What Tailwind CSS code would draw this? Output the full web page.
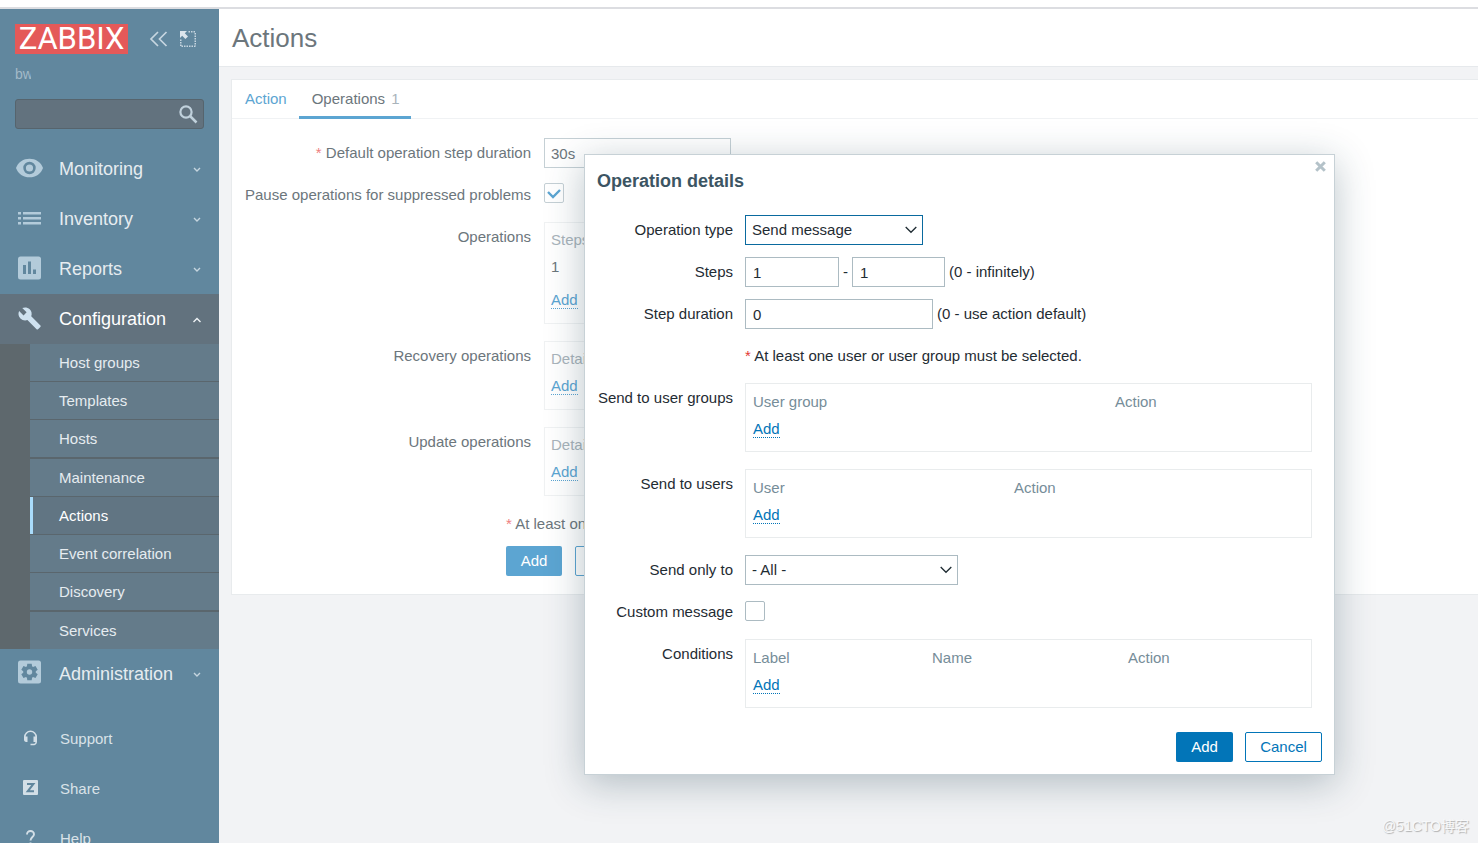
<!DOCTYPE html>
<html lang="en">
<head>
<meta charset="utf-8">
<title>Actions</title>
<script src="https://cdn.jsdelivr.net/npm/@tailwindcss/browser@4"></script>
</head>
<body class="relative flex h-screen flex-col overflow-hidden bg-[#f2f3f5] font-['Liberation_Sans','Noto_Sans_CJK_SC',sans-serif] text-[15px] leading-5 text-[#6c767c]">
<div class="h-[9px] shrink-0 border-b-2 border-[#dcdde1] bg-white"></div>
<div class="flex min-h-0 flex-1">
  <!-- Sidebar -->
  <aside class="flex w-[219px] shrink-0 flex-col overflow-hidden bg-[#61879e] text-[#e6ecf0]">
    <div class="flex shrink-0 items-center pt-[15px] pl-[15px]">
      <a href="#" class="flex h-[30px] w-[113px] items-center justify-center bg-[#e45959] font-[Roboto,sans-serif] text-[31px] leading-[30px] text-white">ZABBIX</a>
      <button type="button" aria-label="Collapse sidebar" class="ml-[21px]"><svg width="19" height="16" viewBox="0 0 19 16" fill="none" stroke="#c7d6e0" stroke-width="1.700"><path d="M9 1L2 8L9 15M17.500 1L10.500 8L17.500 15"/></svg></button>
      <button type="button" aria-label="Hide sidebar" class="ml-3"><svg width="16" height="16" viewBox="0 0 16 16" fill="none"><path d="M8.500 .75H16M15.250 2V15.500M.75 8.500V15.500M1.500 15.250H15" stroke="#c7d6e0" stroke-width="1.500" stroke-dasharray="1.500 1"/><path d="M0 0H7L4.800 2.200L8 5.400L5.400 8L2.200 4.800L0 7Z" fill="#dbe5ec"/></svg></button>
    </div>
    <div class="mt-[10px] ml-[15px] w-4 shrink-0 overflow-hidden text-sm leading-5 text-[#a3bac8]">bw</div>
    <label class="relative mx-[15px] mt-[15px] block shrink-0">
      <input type="text" aria-label="Search" class="block h-[30px] w-full rounded-[3px] border border-[#56646d] bg-[#62727e] px-2 outline-none">
      <svg class="absolute top-[6px] right-[6px]" width="19" height="19" viewBox="0 0 19 19" fill="none" stroke="#c0d1dc"><circle cx="7" cy="7" r="5.600" stroke-width="2.200"/><path d="M11 11L17.500 17.500" stroke-width="2.500"/></svg>
    </label>
    <nav class="mt-[15px] shrink-0 text-[18px]">
      <a href="#" class="flex h-[50px] items-center pr-[17px] pl-[15px]">
        <svg width="29" height="30" viewBox="0 0 29 30"><path d="M1 14C3 8 8.500 4.700 14.500 4.700S26 8 28 14C26 20 20.500 23.300 14.500 23.300S3 20 1 14Z" fill="#b3cbda"/><circle cx="14.500" cy="14" r="4.900" fill="none" stroke="#61879e" stroke-width="2.600"/></svg>
        <span class="ml-[15px] flex-1">Monitoring</span>
        <svg width="10" height="8" viewBox="0 0 10 8" fill="none" stroke="#c5d5df" stroke-width="1.400"><path d="M2 3L5 6L8 3"/></svg>
      </a>
      <a href="#" class="flex h-[50px] items-center pr-[17px] pl-[15px]">
        <svg width="29" height="30" viewBox="0 0 29 30" fill="#b3cbda"><path d="M3 8h3v2.500H3zM8 8h18v2.500H8zM3 13h3v2.500H3zM8 13h18v2.500H8zM3 18h3v2.500H3zM8 18h18v2.500H8z"/></svg>
        <span class="ml-[15px] flex-1">Inventory</span>
        <svg width="10" height="8" viewBox="0 0 10 8" fill="none" stroke="#c5d5df" stroke-width="1.400"><path d="M2 3L5 6L8 3"/></svg>
      </a>
      <a href="#" class="flex h-[50px] items-center pr-[17px] pl-[15px]">
        <svg width="29" height="30" viewBox="0 0 29 30"><rect x="3" y="2.500" width="23" height="23" rx="2.500" fill="#b3cbda"/><path d="M8 11h3v9H8zM13 7.500h3V20h-3zM18 15.500h3V20h-3z" fill="#61879e"/></svg>
        <span class="ml-[15px] flex-1">Reports</span>
        <svg width="10" height="8" viewBox="0 0 10 8" fill="none" stroke="#c5d5df" stroke-width="1.400"><path d="M2 3L5 6L8 3"/></svg>
      </a>
      <a href="#" class="flex h-[50px] items-center bg-[#62727e] pr-[17px] pl-[15px] text-white">
        <svg width="29" height="30" viewBox="0 0 29 30"><path transform="translate(2.500 2.300) scale(1.010)" d="M22.700 19L13.600 9.900c.9-2.300.4-5-1.500-6.900-2-2-5-2.400-7.400-1.300L9 6 6 9 1.600 4.700C.4 7.100.9 10.100 2.900 12.100c1.900 1.900 4.600 2.400 6.900 1.500l9.100 9.100c.4.4 1 .4 1.400 0l2.300-2.300c.5-.4.5-1.100.1-1.400z" fill="#cfe2f0"/></svg>
        <span class="ml-[15px] flex-1">Configuration</span>
        <svg width="10" height="8" viewBox="0 0 10 8" fill="none" stroke="#eef3f6" stroke-width="1.400"><path d="M1.500 7L5 3.500L8.500 7"/></svg>
      </a>
      <div class="bg-[#5e686d] pl-[30px] text-[15px]">
        <a href="#" class="flex h-[38px] items-center border-b border-[#5a666d] bg-[#647b8a] pl-[29px]">Host groups</a>
        <a href="#" class="flex h-[38px] items-center border-b border-[#5a666d] bg-[#647b8a] pl-[29px]">Templates</a>
        <a href="#" class="flex h-[39px] items-center border-b-2 border-[#5a666d] bg-[#647b8a] pl-[29px]">Hosts</a>
        <a href="#" class="flex h-[38px] items-center border-b border-[#5a666d] bg-[#647b8a] pl-[29px]">Maintenance</a>
        <a href="#" class="flex h-[38px] border-b border-[#5a666d] bg-[#617583] text-white"><span class="flex flex-1 items-center border-l-[3px] border-[#a9dcfb] pl-[26px]">Actions</span></a>
        <a href="#" class="flex h-[38px] items-center border-b border-[#5a666d] bg-[#647b8a] pl-[29px]">Event correlation</a>
        <a href="#" class="flex h-[39px] items-center border-b-2 border-[#5a666d] bg-[#647b8a] pl-[29px]">Discovery</a>
        <a href="#" class="flex h-[37px] items-center bg-[#647b8a] pl-[29px]">Services</a>
      </div>
      <a href="#" class="flex h-[50px] items-center pr-[17px] pl-[15px]">
        <svg width="29" height="30" viewBox="0 0 29 30"><rect x="3" y="1.500" width="23" height="23" rx="2.500" fill="#b3cbda"/><g fill="#61879e"><circle cx="14.500" cy="13" r="6.200"/><path d="M12.300 4.800h4.400l.6 4h-5.600zM12.300 21.200h4.400l.6-4h-5.600z"/><path transform="rotate(60 14.500 13)" d="M12.300 4.800h4.400l.6 4h-5.600zM12.300 21.200h4.400l.6-4h-5.600z"/><path transform="rotate(120 14.500 13)" d="M12.300 4.800h4.400l.6 4h-5.600zM12.300 21.200h4.400l.6-4h-5.600z"/></g><circle cx="14.500" cy="13" r="2.700" fill="#b3cbda"/></svg>
        <span class="ml-[15px] flex-1">Administration</span>
        <svg width="10" height="8" viewBox="0 0 10 8" fill="none" stroke="#c5d5df" stroke-width="1.400"><path d="M2 3L5 6L8 3"/></svg>
      </a>
    </nav>
    <nav class="mt-[15px] shrink-0 text-[#d9e2e8]">
      <a href="#" class="flex h-[50px] items-center gap-[22px] pl-[23px]">
        <svg width="15" height="18" viewBox="0 0 15 18"><path d="M1.800 9V7a5.700 5.700 0 0 1 11.400 0V9" fill="none" stroke="#d3dfe7" stroke-width="1.600"/><path d="M1 6.500h3.500V12H3.200C1.800 12 1 11 1 9.800zM10.500 6.500H14v5.300c0 1.700-1.200 3.400-2.600 3.400H7.500v-1.500h3.600c.8 0 1.300-.7 1.300-1.700h-1.900z" fill="#d3dfe7"/></svg>Support</a>
      <a href="#" class="flex h-[50px] items-center gap-[22px] pl-[23px]">
        <svg width="15" height="18" viewBox="0 0 15 18"><rect y="0" width="15" height="15" rx="1" fill="#d3dfe7"/><path d="M4 3.900H10.400L4.700 11.300H11" fill="none" stroke="#61879e" stroke-width="2"/></svg>Share</a>
      <a href="#" class="flex h-[50px] items-center gap-[22px] pl-[23px]">
        <svg width="15" height="18" viewBox="0 0 15 18"><path d="M4 4.500C4 2.200 5.500 1 7.500 1S11 2.200 11 4.200C11 7 7.500 7 7.500 10.500M7.500 12.500V14.500" fill="none" stroke="#d3dfe7" stroke-width="1.900"/></svg>Help</a>
    </nav>
  </aside>
  <!-- Page -->
  <main class="min-w-0 flex-1">
    <header class="flex h-[58px] items-center border-b border-[#e6e9ec] bg-white pl-[13px]"><h1 class="text-[26px] leading-8">Actions</h1></header>
    <form class="mt-3 ml-3 border border-r-0 border-[#e8ebed] bg-white pb-[18px]">
      <div class="flex h-[39px] border-b border-[#f0f2f4]">
        <a href="#" class="pt-[9px] pr-3 pl-[13px] text-[#5ca5d2]">Action</a>
        <a href="#" class="h-[39px] border-b-[3px] border-[#5ca5d2] pt-[9px] pr-[11px] pl-[13px]">Operations <span class="ml-0.5 text-[#a9b4bb]">1</span></a>
      </div>
      <div class="mt-[19px] grid grid-cols-[299px_1fr] gap-x-[13px] gap-y-3">
        <label for="dur" class="pt-[5px] text-right"><span class="text-[#ee7e7e]">*</span> Default operation step duration</label>
        <input id="dur" type="text" value="30s" class="h-[30px] w-[187px] border border-[#c5d0d5] px-[6px] outline-none">
        <label for="pause" class="pt-[5px] text-right whitespace-nowrap">Pause operations for suppressed problems</label>
        <div class="flex h-[30px] items-start pt-[3px]"><span class="relative flex"><input id="pause" type="checkbox" checked class="h-5 w-5 appearance-none rounded-[2px] border border-[#c5d0d5] bg-white"><svg class="pointer-events-none absolute top-1 left-[3px]" width="14" height="14" viewBox="0 0 14 14" fill="none" stroke="#5ca5d2" stroke-width="2.400"><path d="M1 5L6 10L13 3"/></svg></span></div>
        <div class="pt-[5px] text-right">Operations</div>
        <div class="mb-[5px] h-[102px] w-[600px] border border-[#f0f2f3] px-[6px] pt-[7px]">
          <table><thead><tr><th class="h-5 p-0 text-left font-normal text-[#a9b4bb]">Steps</th></tr></thead><tbody><tr><td class="h-[34px] p-0 leading-[34px]">1</td></tr></tbody></table>
          <button type="button" class="mt-2 block border-b border-dotted border-[#5ca5d2] leading-4 text-[#5ca5d2]">Add</button>
        </div>
        <div class="pt-[5px] text-right">Recovery operations</div>
        <div class="mb-[5px] h-[69px] w-[600px] border border-[#f0f2f3] px-[6px] pt-[7px]">
          <table><thead><tr><th class="h-5 p-0 text-left font-normal text-[#a9b4bb]">Details</th></tr></thead></table>
          <button type="button" class="mt-[9px] block border-b border-dotted border-[#5ca5d2] leading-4 text-[#5ca5d2]">Add</button>
        </div>
        <div class="pt-[5px] text-right">Update operations</div>
        <div class="h-[69px] w-[600px] border border-[#f0f2f3] px-[6px] pt-[7px]">
          <table><thead><tr><th class="h-5 p-0 text-left font-normal text-[#a9b4bb]">Details</th></tr></thead></table>
          <button type="button" class="mt-[9px] block border-b border-dotted border-[#5ca5d2] leading-4 text-[#5ca5d2]">Add</button>
        </div>
      </div>
      <div class="ml-[274px]">
        <p class="mt-[13px] leading-[30px]"><span class="text-[#ee7e7e]">*</span> At least one operation must exist.</p>
        <div class="mt-[7px] flex gap-[13px]">
          <button type="button" class="h-[30px] w-14 rounded-[2px] bg-[#5ca5d2] text-white">Add</button>
          <button type="button" class="h-[30px] rounded-[2px] border border-[#5ca5d2] px-[14px] text-[#5ca5d2]">Cancel</button>
        </div>
      </div>
    </form>
  </main>
</div>
<!-- Dialog -->
<div role="dialog" aria-labelledby="dlg" class="absolute top-[154px] left-[584px] w-[751px] border border-[#c7d1d6] bg-white px-3 pb-3 text-[#1f2c33] shadow-[0_8px_36px_rgba(31,62,78,0.3)]">
  <button type="button" aria-label="Close" class="absolute top-[6px] right-[8px]"><svg width="11" height="11" viewBox="0 0 11 11" fill="none" stroke="#b4c2c9" stroke-width="3"><path d="M1.200 1.200L9.800 9.800M9.800 1.200L1.200 9.800"/></svg></button>
  <h2 id="dlg" class="pt-[15px] text-[18px] leading-[22px] font-bold text-[#3c5563]">Operation details</h2>
  <form class="mt-[23px] grid grid-cols-[136px_1fr] gap-x-3 gap-y-3">
    <label for="type" class="pt-[5px] text-right">Operation type</label>
    <div class="relative w-[178px]"><select id="type" class="h-[30px] w-full appearance-none border border-[#0a6a9f] bg-white px-[6px] outline-none"><option>Send message</option></select><svg class="pointer-events-none absolute top-[11px] right-[6px]" width="12" height="8" viewBox="0 0 12 8" fill="none" stroke="#1f2c33" stroke-width="1.300"><path d="M.7 1L6 6.300L11.300 1"/></svg></div>
    <label for="s1" class="pt-[5px] text-right">Steps</label>
    <div class="flex items-center"><input id="s1" type="text" value="1" class="h-[30px] w-[94px] border border-[#acbbc2] px-[7px] outline-none"><span class="px-1">-</span><input type="text" aria-label="Step to" value="1" class="h-[30px] w-[93px] border border-[#acbbc2] px-[7px] outline-none"><span class="pl-1">(0 - infinitely)</span></div>
    <label for="sd" class="pt-[5px] text-right">Step duration</label>
    <div class="flex items-center"><input id="sd" type="text" value="0" class="h-[30px] w-[188px] border border-[#acbbc2] px-[7px] outline-none"><span class="pl-1">(0 - use action default)</span></div>
    <p class="col-start-2 leading-[30px]"><span class="text-[#e33734]">*</span> At least one user or user group must be selected.</p>
    <div class="pt-[5px] text-right whitespace-nowrap">Send to user groups</div>
    <div class="mr-[10px] mb-[5px] h-[69px] border border-[#e9eced] px-[7px] pt-2">
      <table class="w-full table-fixed"><thead><tr class="text-left text-[#768d99]"><th class="h-5 w-[362px] p-0 font-normal">User group</th><th class="h-5 p-0 font-normal">Action</th></tr></thead></table>
      <button type="button" class="mt-[9px] block border-b border-dotted border-[#0275b8] leading-4 text-[#0275b8]">Add</button>
    </div>
    <div class="pt-[5px] text-right">Send to users</div>
    <div class="mr-[10px] mb-[5px] h-[69px] border border-[#e9eced] px-[7px] pt-2">
      <table class="w-full table-fixed"><thead><tr class="text-left text-[#768d99]"><th class="h-5 w-[261px] p-0 font-normal">User</th><th class="h-5 p-0 font-normal">Action</th></tr></thead></table>
      <button type="button" class="mt-[9px] block border-b border-dotted border-[#0275b8] leading-4 text-[#0275b8]">Add</button>
    </div>
    <label for="only" class="pt-[5px] text-right">Send only to</label>
    <div class="relative w-[213px]"><select id="only" class="h-[30px] w-full appearance-none border border-[#acbbc2] bg-white px-[6px] outline-none"><option>- All -</option></select><svg class="pointer-events-none absolute top-[11px] right-[6px]" width="12" height="8" viewBox="0 0 12 8" fill="none" stroke="#1f2c33" stroke-width="1.300"><path d="M.7 1L6 6.300L11.300 1"/></svg></div>
    <label for="cm" class="pt-[5px] text-right">Custom message</label>
    <div class="flex h-[30px] items-start pt-1"><input id="cm" type="checkbox" class="h-5 w-5 appearance-none rounded-[2px] border border-[#acbbc2] bg-white"></div>
    <div class="pt-[5px] text-right">Conditions</div>
    <div class="mr-[10px] h-[69px] border border-[#e9eced] px-[7px] pt-2">
      <table class="w-full table-fixed"><thead><tr class="text-left text-[#768d99]"><th class="h-5 w-[179px] p-0 font-normal">Label</th><th class="h-5 w-[196px] p-0 font-normal">Name</th><th class="h-5 p-0 font-normal">Action</th></tr></thead></table>
      <button type="button" class="mt-[9px] block border-b border-dotted border-[#0275b8] leading-4 text-[#0275b8]">Add</button>
    </div>
  </form>
  <div class="mt-6 flex justify-end gap-3">
    <button type="button" class="h-[30px] w-[57px] rounded-[2px] bg-[#0275b8] text-white">Add</button>
    <button type="button" class="h-[30px] w-[77px] rounded-[2px] border border-[#0275b8] text-[#0275b8]">Cancel</button>
  </div>
</div>
<div class="absolute right-[9px] bottom-[7px] text-sm text-[#f8f9fa] [text-shadow:1px_1px_1px_#b0b0b0]">@51CTO博客</div>
</body>
</html>
